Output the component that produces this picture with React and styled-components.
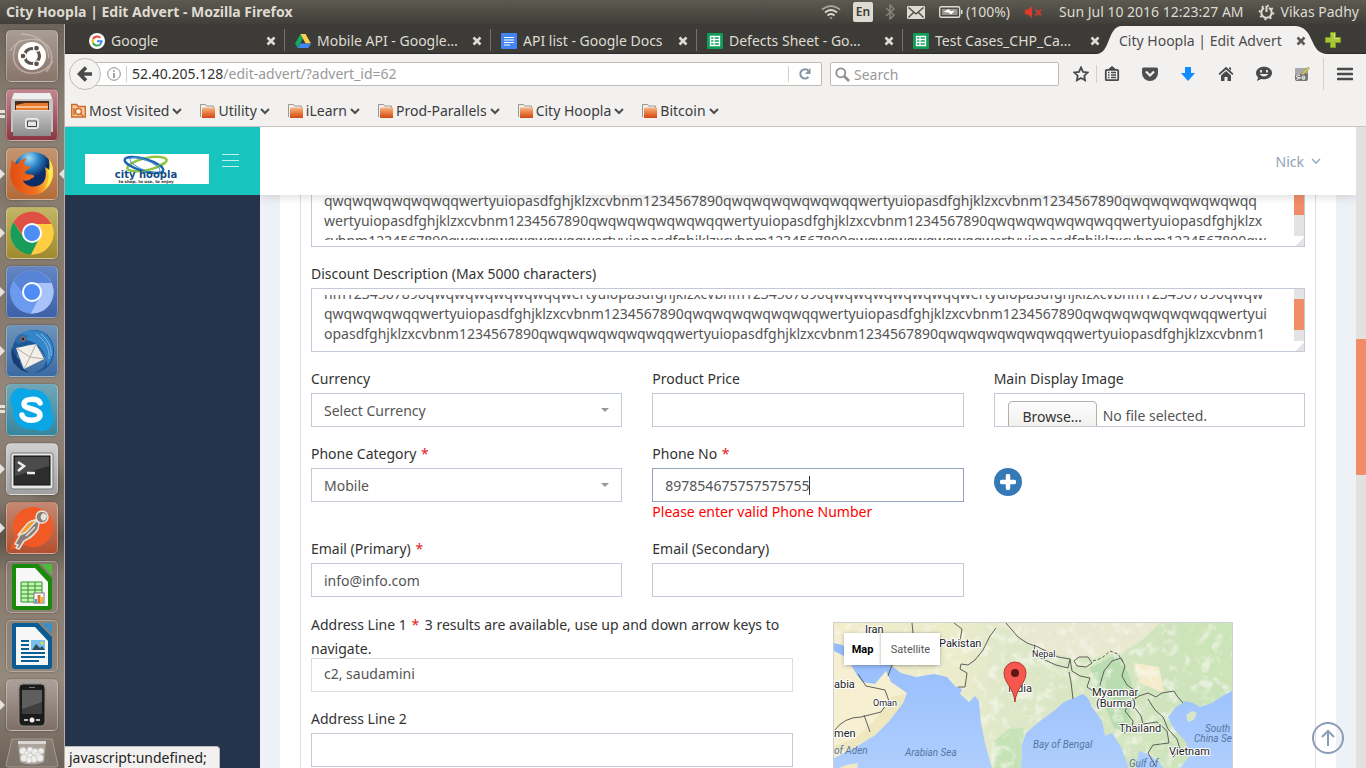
import React, { useEffect, useRef } from "react";
import styled, { createGlobalStyle, css } from "styled-components";

const GlobalStyle = createGlobalStyle`
  * { box-sizing: border-box; }
  body { margin: 0; overflow: hidden; font-family: "Noto Sans", "Open Sans", sans-serif; font-size: 14px; color: #333; }
  button, input, select, textarea { font: inherit; color: inherit; margin: 0; }
  button { border: 0; background: none; padding: 0; }
  a { color: inherit; text-decoration: none; }
  svg { display: block; flex: none; }
`;

const chrome = css`font-family: "Noto Sans", "Open Sans", sans-serif; white-space: nowrap;`;

/* ---------- desktop ---------- */
const Desktop = styled.div`height: 100vh; display: flex; flex-direction: column;`;
const TopPanel = styled.header`
  ${chrome}
  flex: none; height: 24px; display: flex; align-items: center; padding: 0 7px 0 6px;
  background: linear-gradient(#5d5a50, #3f3e39); color: #dfdbd2; line-height: 24px;
`;
const WindowTitle = styled.strong`flex: 1; font-weight: 700;`;
const Indicators = styled.div`display: flex; align-items: center; gap: ${(p) => p.$gap}px; margin-left: ${(p) => p.$before || 0}px;`;
const LanguageBadge = styled.span`
  width: 20px; height: 20px; border-radius: 2px; background: #dfdbd2; color: #3c3b37;
  text-align: center; line-height: 20px; font-size: 12px; font-weight: 600;
`;
const Below = styled.div`flex: 1; min-height: 0; display: flex;`;

/* ---------- launcher ---------- */
const Launcher = styled.nav`
  flex: none; width: 65px; padding-top: 6px; overflow: hidden; border-right: 1px solid #b8b0a6;
  display: flex; flex-direction: column; align-items: center; gap: 7px;
  background:
    radial-gradient(circle at 20% 22%, #6f655b88 0 6px, transparent 24px),
    radial-gradient(circle at 80% 62%, #5c524888 0 6px, transparent 26px),
    linear-gradient(#6c6359 0, #8b8074 12%, #85796d 38%, #93887b 50%, #82776a 64%, #5d5348 69%, #85796c 74%, #94897c 88%, #6c6156);
`;
const Tile = styled.button`
  position: relative; flex: none; width: 52px; height: 52px; border-radius: 5px;
  background: ${(p) => p.$bg}; border: 1px solid #ffffff4d;
  display: flex; align-items: center; justify-content: center;
  box-shadow: 0 0 2px #0006;
`;
const Running = styled.span`
  position: absolute; left: -7px; top: 20px; width: 5px; height: 10px;
  background: ${(p) => (p.$many ? "repeating-linear-gradient(#e6e3de 0 3px, transparent 3px 5px)" : "#e6e3de")};
  clip-path: ${(p) => (p.$many ? "none" : "polygon(0 0, 100% 50%, 0 100%)")};
`;
const Active = styled.span`
  position: absolute; right: -7px; top: 20px; width: 5px; height: 10px; background: #e6e3de;
  clip-path: polygon(100% 0, 0 50%, 100% 100%);
`;

/* ---------- browser chrome ---------- */
const Browser = styled.div`position: relative; flex: 1; min-width: 0; display: flex; flex-direction: column; background: #f2f1f0;`;
const TabStrip = styled.div`
  ${chrome}
  flex: none; height: 30px; display: flex; padding: 0 51px 0 14px; background: #3c3b37;
  color: #dfdbd2; border-bottom: 1px solid #2c2b28; position: relative;
`;
const Tab = styled.div`
  position: relative; flex: 1 1 0; min-width: 0; display: flex; align-items: center; gap: 6px;
  padding: 4px 9px 0 10px; color: ${(p) => (p.$on ? "#4c4c4c" : "inherit")};
  &::after {
    content: ""; display: ${(p) => (p.$line ? "block" : "none")};
    position: absolute; right: 0; top: 5px; bottom: 2px; width: 1px; background: #74726b;
  }
`;
const TabTitle = styled.span`flex: 1; min-width: 0; overflow: hidden; text-overflow: ellipsis; line-height: 20px; position: relative;`;
const TabClose = styled.button`position: relative; width: 10px; height: 10px;`;
const ActiveShape = styled.svg`position: absolute; left: -13px; top: 2px; width: calc(100% + 26px); height: 28px;`;
const NewTab = styled.button`position: absolute; right: 25px; top: 8px;`;
const NavBar = styled.div`${chrome} flex: none; height: 40px; display: flex; align-items: center; padding: 0 13px 0 4px; color: #4c4c4c;`;
const BackButton = styled.button`
  flex: none; width: 32px; height: 32px; border-radius: 50%; background: #f4f3f2; border: 1px solid #c1bcb6;
  display: flex; align-items: center; justify-content: center; position: relative; margin-right: -16px;
`;
const UrlBar = styled.div`
  flex: 1; min-width: 0; height: 24px; display: flex; align-items: center; background: #fff;
  border: 1px solid #c1bcb6; border-radius: 2px; padding: 0 9px 0 21px;
`;
const Divider = styled.span`flex: none; width: 1px; height: ${(p) => p.$h || 16}px; background: #d3d0cc; margin: 0 ${(p) => p.$m || 5}px;`;
const Address = styled.span`flex: 1; color: #999; line-height: 20px; b { color: #333; font-weight: 400; }`;
const SearchBar = styled.label`
  flex: none; width: 229px; height: 24px; margin-left: 8px; display: flex; align-items: center; gap: 4px; background: #fff;
  border: 1px solid #c1bcb6; border-radius: 2px; padding: 0 4px;
`;
const SearchInput = styled.input`border: 0; outline: 0; padding: 0; flex: 1; min-width: 0; background: none; &::placeholder { color: #999; opacity: 1; }`;
const Tools = styled.div`display: flex; align-items: center; gap: 22px;`;
const StarButton = styled.button`margin-left: 14px;`;
const Bookmarks = styled.div`
  ${chrome}
  flex: none; height: 33px; display: flex; align-items: center; gap: 18px; padding: 1px 6px 0;
  color: #3c3c3c; border-bottom: 1px solid #c8c4bf;
`;
const Bookmark = styled.button`display: flex; align-items: center; gap: 3px; white-space: nowrap; line-height: 20px;`;

/* ---------- web page ---------- */
const Viewport = styled.div`flex: 1; min-height: 0; display: flex; overflow: hidden;`;
const Sidebar = styled.aside`flex: none; width: 195px; background: #26344b;`;
const Brand = styled.div`height: 68px; background: #18c4be; display: flex; padding: 27px 20px 0; gap: 13px;`;
const MenuToggle = styled.button`width: 17px; height: 13px; border: solid #c5efed; border-width: 1px 0; display: flex; align-items: center;
  &::after { content: ""; width: 100%; height: 1px; background: #c5efed; }`;
const Main = styled.main`position: relative; flex: 1; min-width: 0; overflow: hidden; background: #eef1f5; padding: 0 20px;`;
const PageHeader = styled.div`
  position: absolute; z-index: 2; left: 0; right: 0; top: 0; height: 68px; background: #fff;
  box-shadow: 0 1px 10px rgba(50, 50, 50, 0.2); display: flex; justify-content: flex-end; padding: 24px 35px 0 0;
`;
const UserMenu = styled.a`display: flex; align-items: center; gap: 7px; height: 20px; color: #8ea3b6;`;
const Card = styled.section`background: #fff; padding: 0 20px; height: 100%;`;
const Form = styled.form`border: solid #ddd; border-width: 0 1px; padding: 56px 10px 0; height: 100%; display: flex; flex-direction: column; gap: 16px;`;
const Columns = styled.div`display: grid; grid-template-columns: repeat(${(p) => p.$n}, 1fr); column-gap: 30px; align-items: start;`;
const AddressStack = styled.div`display: flex; flex-direction: column; gap: 16px; min-width: 0;`;
const Field = styled.div`display: flex; flex-direction: column; min-width: 0; position: relative;`;
const Label = styled.label`line-height: ${(p) => (p.$long ? 24 : 22)}px; margin-bottom: ${(p) => (p.$long ? -3 : 3)}px;`;
const Required = styled.span`color: #e02222; padding: 0 2px 0 1px;`;
const boxed = css`height: 34px; width: 100%; border: 1px solid ${(p) => (p.$active ? "#93a1bb" : p.$muted ? "#ddd" : "#c2cad8")}; border-radius: 0; background: #fff; color: #555; outline: 0;`;
const TextInput = styled.input`${boxed} padding: ${(p) => (p.$muted ? "0 12px 4px" : "0 12px")};`;
const SelectBox = styled.select`
  ${boxed} appearance: none; padding: 0 12px;
  background: #fff url("data:image/svg+xml,%3Csvg xmlns='http://www.w3.org/2000/svg' width='8' height='4'%3E%3Cpath d='M0 0h8l-4 4z' fill='%23999'/%3E%3C/svg%3E") no-repeat right 12px center;
`;
const Caret = styled.span`position: absolute; left: 157px; top: 33px; width: 1px; height: 19px; background: #333;`;
const ErrorText = styled.p`margin: 0; color: #f00; line-height: 20px;`;
const AreaFrame = styled.div`position: relative; flex: none; height: 64px; border: 1px solid #c2cad8; display: flex; padding-left: 12px;`;
const Area = styled.textarea`
  flex: 1; min-width: 0; height: 50px; margin: 6px 0; padding: 0; border: 0; outline: 0; resize: none;
  overflow: hidden; white-space: pre; line-height: 20px; color: #555;
`;
const Track = styled.span`flex: none; width: 10px; height: 52px; background: #e3e3e3; padding-top: ${(p) => p.$top}px;
  &::after { content: ""; display: block; height: 31px; background: #f08d66; }`;
const Grip = styled.span`position: absolute; right: 0; bottom: 0; width: 8px; height: 8px; background: linear-gradient(135deg, transparent 50%, #e4e4e4 50%);`;
const FilePicker = styled.label`${boxed} display: flex; overflow: hidden; padding: 7px 13px 0; gap: 6px; line-height: 30px; white-space: nowrap;`;
const HiddenFile = styled.input`position: absolute; opacity: 0; width: 1px; height: 1px;`;
const Browse = styled.span`
  height: 34px; width: 89px; text-align: center; border: 1px solid #b3b0ac; border-radius: 4px; color: #333;
  background: linear-gradient(#fcfcfc, #eeedec);
`;
const AddButton = styled.button`
  margin-top: 25px; width: 28px; height: 28px; border-radius: 50%; background: #337ab7;
  display: flex; align-items: center; justify-content: center;
`;
const MapFrame = styled.div`position: relative; margin: 9px 0 0 10px; width: 400px; max-width: 100%; height: 300px; border: 1px solid #d0d0d0; overflow: hidden; background: #a3c7fb;`;
const MapTypes = styled.div`position: absolute; left: 10px; top: 10px; display: flex; box-shadow: 0 1px 4px #0004; font-family: Roboto, sans-serif; font-size: 11px;`;
const MapType = styled.button`
  height: 32px; width: ${(p) => (p.$on ? 37 : 59)}px; background: #fff; text-align: center;
  font-weight: ${(p) => (p.$on ? 700 : 400)}; color: ${(p) => (p.$on ? "#000" : "#565656")};
  box-shadow: ${(p) => (p.$on ? "none" : "-1px 0 2px #0003")};
`;
const ScrollTop = styled.button`position: absolute; z-index: 3; right: 12px; bottom: 14px; width: 32px; height: 32px; border: 2px solid #8b9cb5; border-radius: 50%; display: flex; align-items: center; justify-content: center;`;
const PageScrollbar = styled.div`flex: none; width: 10px; background: #e3e1e0; padding-top: 212px; &::after { content: ""; display: block; height: 136px; background: #f08d66; border-radius: 1px; }`;
const StatusText = styled.div`${chrome} position: absolute; left: 0; bottom: 0; z-index: 4; width: 155px; height: 22px; line-height: 22px; padding-left: 4px; color: #222; background: #f2f1f0; border: solid #bbb; border-width: 1px 1px 0 0; border-top-right-radius: 4px;`;

/* ---------- small icons ---------- */
const Chevron = ({ size = 10, color = "#4c4c4c", width = 2 }) => (
  <svg width={size} height={size} viewBox="0 0 10 10"><path d="M1 3l4 4 4-4" fill="none" stroke={color} strokeWidth={width} /></svg>
);
const Cross = ({ color }) => (
  <svg width="10" height="10" viewBox="0 0 10 10"><path d="M1.500 1.500l7 7M8.500 1.500l-7 7" stroke={color} strokeWidth="2.600" /></svg>
);
const GoogleIcon = () => (
  <svg width="16" height="16" viewBox="0 0 16 16"><circle cx="8" cy="8" r="8" fill="#fff" />
    <g fill="none" strokeWidth="2"><path d="M11.300 4.800A4.500 4.500 0 0 0 4 6" stroke="#ea4335" /><path d="M4 6a4.500 4.500 0 0 0 0 4" stroke="#fbbc05" /><path d="M4 10a4.500 4.500 0 0 0 7 1.400" stroke="#34a853" /><path d="M8 8.200h4.600a4.500 4.500 0 0 1-1.600 3.200" stroke="#4285f4" /></g></svg>
);
const DriveIcon = () => (
  <svg width="16" height="16" viewBox="0 0 16 16"><path d="M5.500 1L0 10.500l2.700 4.500L8 5.600z" fill="#11a861" /><path d="M5.500 1h5L16 10.500h-5.400z" fill="#ffcf48" /><path d="M5.400 10.500H16L13.300 15H2.700z" fill="#4285f4" /></svg>
);
const DocsIcon = () => (
  <svg width="16" height="16" viewBox="0 0 16 16"><rect width="16" height="16" rx="1" fill="#4285f4" /><path d="M3 4.500h10M3 7h10M3 9.500h10M3 12h6" stroke="#fff" strokeWidth="1.200" /></svg>
);
const SheetsIcon = () => (
  <svg width="16" height="16" viewBox="0 0 16 16"><rect width="16" height="16" rx="1" fill="#0f9d58" /><path d="M3.500 3.500h9v9h-9zM3.500 6.500h9M3.500 9.500h9M7 3.500v9" fill="none" stroke="#fff" strokeWidth="1.300" /></svg>
);
const FolderIcon = ({ visited }) => visited ? (
  <svg width="15" height="15" viewBox="0 0 15 15"><path d="M.7 14V1.500h5l1.300 2h7.300V14z" fill="#f7c9a4" stroke="#cf6a24" strokeWidth="1.400" /><circle cx="7.500" cy="8.500" r="3" fill="#fff2e4" stroke="#cf6a24" strokeWidth="1.400" /><path d="M9.500 10.500l3 3M3 5v7" stroke="#cf6a24" strokeWidth="1.400" /></svg>
) : (
  <svg width="15" height="14" viewBox="0 0 15 14"><defs><linearGradient id="folder" x2="0" y2="1"><stop stopColor="#f6b888" /><stop offset=".55" stopColor="#e6763a" /><stop offset="1" stopColor="#cf4a17" /></linearGradient></defs><path d="M.5 13V.5h5l1 1.500h7v2" fill="#f4f2f0" stroke="#9a9690" /><path d="M2 3.500h13V14H2z" fill="url(#folder)" /></svg>
);

/* ---------- launcher artwork ---------- */
const Art = ({ children }) => <svg width="50" height="50" viewBox="0 0 50 50">{children}</svg>;
const DashArt = () => (
  <Art><g fill="none" stroke="#d5cac2" strokeWidth="1.500" opacity=".6"><path d="M3 20C12 5 34 5 42 17c4 7 4 17-3 24" /><path d="M46 30C37 45 17 46 9 34 4 26 7 14 14 9" /><path d="M14 3c16 0 27 9 28 24" /></g>
    <circle cx="25" cy="25" r="14" fill="#fff" /><circle cx="25" cy="25" r="7.500" fill="none" stroke="#5d5149" strokeWidth="3.200" />
    <g fill="#5d5149" stroke="#fff" strokeWidth="1.300"><circle cx="16" cy="25" r="3" /><circle cx="29.500" cy="17.200" r="3" /><circle cx="29.500" cy="32.800" r="3" /></g></Art>
);
const FilesArt = () => (
  <Art><defs><linearGradient id="drawer" x2="0" y2="1"><stop stopColor="#c9c9c9" /><stop offset="1" stopColor="#8d8d8d" /></linearGradient></defs>
    <path d="M7 3h36l3 7v32H4V10z" fill="#c4c4c4" /><path d="M7 3h36l2 6H5z" fill="#efefef" /><path d="M8 11h34v10H8z" fill="#4b2d20" /><path d="M9 15l9-2h23v8H9z" fill="#e87a2d" /><path d="M9 17h32" stroke="#ffd9b0" strokeWidth="1.500" /><path d="M6 20h38v26H6z" fill="url(#drawer)" /><path d="M6 20.500h38" stroke="#dedede" /><rect x="18.500" y="28.500" width="13" height="10" rx="2" fill="#ddd" stroke="#efefef" /><path d="M20.500 31h9v5.500h-9z" fill="#e6e6e6" stroke="#444" /></Art>
);
const FirefoxArt = () => (
  <Art><defs><radialGradient id="globe" cx=".4" cy=".15"><stop stopColor="#a4ddf7" /><stop offset=".5" stopColor="#2a83c6" /><stop offset="1" stopColor="#0b2c66" /></radialGradient><linearGradient id="tail"><stop stopColor="#e44b12" /><stop offset=".6" stopColor="#ee7320" /><stop offset="1" stopColor="#ffdf39" /></linearGradient></defs>
    <circle cx="26" cy="23" r="20" fill="url(#globe)" /><path d="M4 17c-4 18 8 30 22 29 13-1 21-12 20-25 0-5-3-9-4-11 2 6 0 9 0 11l-4-3c2 8 1 17-8 19-7 2-13-2-14-6 3 2 7 0 9-2 2 0 3-2 1-3-2-1-6 0-8-2 0-3 5-4 6-6-2-1-5-1-7-2 0-3 1-5 3-7-5 1-8 3-9 6-3 0-5-2-6-4-1 2-1 5 0 6z" fill="url(#tail)" /><path d="M42 10c6 9 6 22-4 30 4-7 5-14 2-21l3 3z" fill="#ffe84a" /></Art>
);
const ChromeArt = ({ a, b, c, inner = "#4d8df5" }) => (
  <Art><circle cx="25" cy="25" r="21.500" fill={c} /><path d="M25 16h19.300A21.500 21.500 0 0 0 6.400 14l9.800 14z" fill={a} /><path d="M6.400 14A21.500 21.500 0 0 0 24.500 46.500L33 30 17 30z" fill={b} /><path d="M33 29L24 46.500A21.500 21.500 0 0 0 44.500 16H28z" fill={c} /><circle cx="25" cy="25" r="10" fill="#fff" /><circle cx="25" cy="25" r="8" fill={inner} /></Art>
);
const ThunderbirdArt = () => (
  <Art><path d="M7 39C1 23 8 6 25 4c13-1 22 8 22 21 0 12-8 21-20 22 8-3 12-8 13-14-4-5-6-11-12-13C19 15 10 24 7 39z" fill="#1d5796" /><path d="M5 21c-3 13 5 24 18 26-7-3-10-8-10-13-4-3-7-8-8-13z" fill="#153d76" /><path d="M8 13C16 2 36 0 44 15c4 9 2 19-4 25 1-9-5-21-17-25-6-2-11-1-15-2z" fill="#3585c9" /><path d="M9 22l20-4 8 15-20 10z" fill="#f2eee8" /><path d="M9 22l14 9 6-13M17 43l6-12 14 2" fill="none" stroke="#b3aca2" /><path d="M29 8c9 6 14 14 13 25M34 8c8 7 11 15 10 22" fill="none" stroke="#7fbbe6" strokeWidth="1" /><path d="M8 13l5-5 8 1-3 7-8 2z" fill="#2d6cab" /><circle cx="16" cy="13" r="2" fill="#112233" stroke="#cb6845" /></Art>
);
const SkypeArt = () => (
  <Art><path d="M14 3c4 0 6 1 8 2 13-3 24 9 22 21 5 7 2 20-9 20-4 0-5-1-8-2C14 46 4 36 6 23 0 15 5 3 14 3z" fill="#0aa6e6" /><path d="M33 18c-2-5-16-5-16 1s16 4 16 11-16 7-18 0" fill="none" stroke="#fff" strokeWidth="5.500" strokeLinecap="round" /></Art>
);
const TerminalArt = () => (
  <Art><rect x="4" y="9" width="42" height="36" rx="2" fill="#e8e8e8" stroke="#777" /><rect x="7" y="12" width="36" height="29" fill="#2d2d2d" stroke="#111" /><path d="M8 13h34v9L8 32z" fill="#4b4b4b" /><path d="M11 18l6 4-6 5M20 29h8" fill="none" stroke="#eee" strokeWidth="2.500" /></Art>
);
const PostmanArt = () => (
  <Art><circle cx="26" cy="24" r="20" fill="#f15a24" /><path d="M3 47l13-5-8-8z" fill="#f15a24" />
    <g stroke="#e6e2de" strokeWidth="1.500" strokeLinejoin="round"><path d="M28 17l4 3-1 6q-5 8-14 12l-5 8-3-1 2-3-3-1 5-9 9-9z" fill="#8a7d75" /><path d="M11 32l9-11q4-4 10-4l-9 10q-3 4-10 5z" fill="#f79c23" /><path d="M19 33l9-9" fill="none" /><circle cx="35" cy="14" r="6" fill="#8a7d75" /></g>
    <path d="M36 10q-5 4 0 8 3-1 4-4 0-3-4-4z" fill="#e6e2de" /></Art>
);
const DocumentArt = ({ color, light, sheet }) => (
  <Art><path d="M7 2h24l14 14v29q0 3-3 3H8q-3 0-3-3V5q0-3 2-3z" fill={color} /><path d="M34 2h11v11z" fill={light} /><path d="M9 6h19l13 14v24H9z" fill="#f7f7f7" />
    {sheet ? <><path d="M14 20h21v20H14zM14 24h21M14 28h21M14 32h21M14 36h21M21 20v20M28 20v20" fill="#c8f0bd" stroke="#2b9a1d" /><rect x="27" y="31" width="10" height="10" fill="#fff" stroke="#777" /><path d="M29 41v-4" stroke="#3aa2dd" strokeWidth="2" /><path d="M32 41v-8" stroke="#e56f26" strokeWidth="3" /><path d="M35 41v-6" stroke="#f3b51e" strokeWidth="2" /></>
      : <><path d="M14 20h8M14 24h8M14 28h8M14 32h24M14 36h24M14 40h18" stroke="#0b5f94" strokeWidth="2" /><path d="M24 19h14v10H24z" fill="#78c1ec" /><path d="M25 29l4-6 4 4 2-2 3 4z" fill="#2f4d5c" /><circle cx="35" cy="22" r="1.500" fill="#f5d33c" /></>}
  </Art>
);
const PhoneArt = () => (
  <Art><rect x="12" y="4" width="26" height="42" rx="4" fill="#1b1b1b" stroke="#888" /><path d="M15 10h20v24H15z" fill="#3f3f3f" /><path d="M15 10h20v12L15 29z" fill="#5e5e5e" /><path d="M22 7.500h6" stroke="#777" /><circle cx="25" cy="40" r="2.500" fill="#eee" /><path d="M17 40h4M29 40h4" stroke="#eee" strokeWidth="1.500" /></Art>
);
const Trash = () => (
  <svg width="54" height="30" viewBox="0 0 54 30"><path d="M7 1h40l6 26q0 2-2 2H3q-2 0-2-2z" fill="#8f877e" fillOpacity=".5" stroke="#a39b92" /><path d="M13 4h28l-2 20q-12 5-24 0z" fill="#c6c3be" fillOpacity=".6" /><path d="M13 3h28v3H13z" fill="#d9d7d3" />
    <g fill="#efeeec" stroke="#c4c1bd" strokeWidth=".6"><circle cx="18" cy="13" r="3.500" /><circle cx="25" cy="12" r="3" /><circle cx="30" cy="14" r="3.500" /><circle cx="36" cy="13" r="3" /><circle cx="22" cy="16" r="3" /><circle cx="19" cy="20" r="3.500" /><circle cx="25" cy="18" r="3" /><circle cx="29" cy="21" r="3.500" /><circle cx="24" cy="22" r="3" /><circle cx="33" cy="17" r="3" /><circle cx="35" cy="20" r="3.500" /></g></svg>
);

const APPS = [
  { name: "Dash", bg: "linear-gradient(#a89d94, #897469)", art: <DashArt /> },
  { name: "Files", bg: "linear-gradient(#c08890, #8b3542)", art: <FilesArt />, run: 2 },
  { name: "Firefox", bg: "linear-gradient(#c39572, #b26b3a)", art: <FirefoxArt />, run: 1, active: true },
  { name: "Chrome", bg: "linear-gradient(#c2b566, #9f8b2e)", art: <ChromeArt a="#df5145" b="#179c5b" c="#ffcd41" />, run: 1 },
  { name: "Chromium", bg: "linear-gradient(#6485c2, #3d61a5)", art: <ChromeArt a="#5884d8" b="#6c9af0" c="#a7c3fa" />, run: 1 },
  { name: "Thunderbird", bg: "linear-gradient(#6f93b8, #3b6ba3)", art: <ThunderbirdArt />, run: 1 },
  { name: "Skype", bg: "linear-gradient(#70a6b8, #36869f)", art: <SkypeArt />, run: 2 },
  { name: "Terminal", bg: "linear-gradient(#d0d0d0, #a0a0a0)", art: <TerminalArt />, run: 1 },
  { name: "Postman", bg: "linear-gradient(#c38874, #b4502f)", art: <PostmanArt />, run: 1 },
  { name: "Calc", bg: "#90857966", art: <DocumentArt color="#188a0c" light="#4dbb3c" sheet /> },
  { name: "Writer", bg: "#90857966", art: <DocumentArt color="#0a5d94" light="#3b8fc4" /> },
  { name: "Phone", bg: "linear-gradient(#aba099, #7f7067)", art: <PhoneArt />, run: 1 },
];

const TABS = [
  ["Google", GoogleIcon],
  ["Mobile API - Google…", DriveIcon],
  ["API list - Google Docs", DocsIcon],
  ["Defects Sheet - Go…", SheetsIcon],
  ["Test Cases_CHP_Ca…", SheetsIcon],
];
const BOOKMARKS = ["Most Visited", "Utility", "iLearn", "Prod-Parallels", "City Hoopla", "Bitcoin"];

/* ---------- sample advert text ---------- */
const FILL = "qwqwqwqwqwqwq";
const KEYS = "qwertyuiopasdfghjklzxcvbnm1234567890";
const UNIT = KEYS + FILL;
const ADVERT = [
  KEYS,
  FILL + UNIT + UNIT + "q",
  KEYS.slice(1) + FILL + UNIT + "qwertyuiopasdfghjklzx",
  "cvbnm1234567890" + FILL + UNIT + KEYS + "qw",
  KEYS,
].join("\n");
const DISCOUNT = [
  "nm1234567890" + FILL + UNIT + KEYS + "qwqw",
  "qwqwqwqwq" + UNIT + UNIT + "qwertyui",
  KEYS.slice(8) + FILL + UNIT + "qwertyuiopasdfghjklzxcvbnm1",
  KEYS,
].join("\n");

function ScrolledArea({ id, label, text, offset, thumb }) {
  const ref = useRef(null);
  useEffect(() => { ref.current.scrollTop = offset; }, [offset]);
  return (
    <AreaFrame>
      <Area id={id} ref={ref} aria-label={label} defaultValue={text} spellCheck={false} wrap="off" />
      <Track $top={thumb} /><Grip />
    </AreaFrame>
  );
}

const LandPatch = ({ d, fill = "#dcebc9" }) => <path d={d} fill={fill} />;

function AsiaMap() {
  return (
    <svg width="400" height="300" viewBox="0 0 400 300">
      <defs>
        <linearGradient id="sea" x2="0" y2="1"><stop stopColor="#8fb8fb" /><stop offset=".5" stopColor="#b0cffe" /></linearGradient>
        <linearGradient id="land"><stop stopColor="#f2ecc9" /><stop offset=".3" stopColor="#ebeccb" /><stop offset=".42" stopColor="#dfe8c9" /><stop offset="1" stopColor="#c8e2b8" /></linearGradient>
        <filter id="terrain" x="0" y="0" width="100%" height="100%">
          <feTurbulence type="fractalNoise" baseFrequency=".09" numOctaves="3" seed="8" />
          <feColorMatrix values="0 0 0 0 .96  0 0 0 0 .95  0 0 0 0 .88  0 4 0 0 -2" />
        </filter>
        <clipPath id="coast"><path d="M0 0H400V67L390 72 378 80 366 84 359 80 352 78 342 84 334 94 340 106 352 119 355 134 346 145 333 150 326 140 316 132 305 128 302 145 311 165H299L294 143 287 124 278 110 271 113 268 98 258 84 254 75 249 71 240 75 230 79 220 88 206 98 192 110 188 122 187 148 181 165H166L157 142 151 120 147 100 145 78 141 73 135 79 126 71 128 66 121 63 113 54 100 51 82 54 67 50 54 40 43 36 22 31 18 28 8 22 0 20z" /></clipPath>
      </defs>
      <rect width="400" height="300" fill="url(#sea)" />
      <path d="M0 28L12 34 23 52 28 59 41 61 52 48 57 59 73 70 69 80 55 98 41 112 20 125 0 135z" fill="#f7efd2" />
      <path d="M40 98l18-24 14-4-3 10-14 18-14 14-21 13-20 6v-8l22-8z" fill="#efe7bf" />
      <path d="M0 147L12 142 24 140 20 165H0z" fill="#f2e8c4" />
      <g clipPath="url(#coast)">
        <rect width="400" height="300" fill="url(#land)" />
        <LandPatch d="M160 0H325Q310 20 285 30L240 36 200 24 176 8z" fill="#e9e9d2" />
        <LandPatch d="M300 40L325 44 330 70 306 60z" fill="#f4eccb" />
        <LandPatch d="M256 45L285 30 298 60 295 110 280 105z" fill="#b9dcb0" />
        <LandPatch d="M160 118L175 106 190 105 185 165H160z" fill="#c6e2b6" />
        <LandPatch d="M345 0H400V66L350 50z" fill="#cbe4b8" />
        <rect width="400" height="170" filter="url(#terrain)" opacity=".6" />
      </g>
      <path d="M352 92l6-4 5 2-3 7-6 2z" fill="#d8e6c6" />
      <path d="M0 108q10-14 27-14l20-5 8-11-4-11-19-4-8-12M30 92l6 17M78 0l1 10M120 0l8 6-2 12-11 6M162 5l-6 8-7 14-8 10-7 5-7-1-1 5 7 4-2 14h-7M54 53l4-11 9-2 20 1M172 0l12 14 9 6 8 3-2 8 14 7 9 4 12 3 2-9-12-2-10-5-14-7M236 36l2 12 8 5 10 2-3 9 6 4M240 38l5-4h9l4 6-6 4-9-1zM235 49l2 10 2 17M266 62l4-14 8-10 9-3 4 8-3 10 5 9 7 5 2 8-7 5-4 8 8 10-1 9-8 3M295 80l10-7 9-3 8 4 6-4 12-2 3 5 6 7M301 85l6 8 2 8 14-2 10 9 2 12-16 2-5 8 8 14M314 76l7 11 8 7 5 12 9 10 3 10-7 8" fill="none" stroke="#5d615c" strokeWidth="1" strokeLinejoin="round" />
      <path d="M259 38l9-3 8-7 8 3 5 8" fill="none" stroke="#5d615c" strokeDasharray="3 2" />
      <g fontFamily="Roboto, sans-serif" fontSize="11" fill="#222" stroke="#fff" strokeWidth="2" paintOrder="stroke" strokeLinejoin="round">
        <text x="31" y="10">Iran</text><text x="105" y="24">Pakistan</text><text x="198" y="34" fontSize="9">Nepal</text>
        <text x="0" y="65">abia</text><text x="39" y="83" fontSize="9">Oman</text><text x="0" y="114">men</text><text x="174" y="69">India</text>
        <text x="258" y="73">Myanmar</text><text x="262" y="84">(Burma)</text><text x="285" y="109">Thailand</text><text x="335" y="132">Vietnam</text>
        <g fontSize="10" fontStyle="italic" fill="#55779f" stroke="none"><text x="0" y="131">of Aden</text><text x="71" y="133">Arabian Sea</text><text x="199" y="125">Bay of Bengal</text><text x="371" y="109">South</text><text x="360" y="119">China Se</text><text x="295" y="144">Gulf of</text><text x="290" y="155">Thailand</text></g>
      </g>
      <path d="M181 79c-1-14-11-19-11-29a11 11 0 0 1 22 0c0 10-10 15-11 29z" fill="#f6584f" stroke="#b53a35" /><circle cx="181" cy="50" r="4" fill="#5e1715" />
    </svg>
  );
}

const Star = () => <Required>*</Required>;

export default function App() {
  return (
    <Desktop>
      <GlobalStyle />
      <TopPanel>
        <WindowTitle>City Hoopla | Edit Advert - Mozilla Firefox</WindowTitle>
        <Indicators $gap={12}>
          <svg width="20" height="16" viewBox="0 0 20 16" fill="none" stroke="#dfdbd2" strokeWidth="1.800"><path d="M1 5.500q9-7 18 0" opacity=".6" /><path d="M4 8.500q6-5 12 0M6.500 11.500q3.500-3 7 0" /><path d="M8.500 13.500h3L10 15z" fill="#dfdbd2" stroke="none" /></svg>
          <LanguageBadge>En</LanguageBadge>
          <svg width="10" height="16" viewBox="0 0 10 16" fill="none" stroke="#8a877f" strokeWidth="1.400"><path d="M1 4l8 7-4 4V1l4 4-8 7" /></svg>
          <svg width="18" height="13" viewBox="0 0 18 13"><rect width="18" height="13" rx="1" fill="#dfdbd2" /><path d="M1.500 1.500L9 8l7.500-6.500M1.500 11.500l5-5M16.500 11.500l-5-5" fill="none" stroke="#45443f" strokeWidth="1.300" /></svg>
        </Indicators>
        <Indicators $gap={3} $before={14}>
          <svg width="24" height="12" viewBox="0 0 24 12"><rect x=".7" y=".7" width="20" height="10.600" rx="1.500" fill="none" stroke="#dfdbd2" strokeWidth="1.400" /><rect x="3" y="3" width="15.500" height="6" fill="#99968e" /><path d="M22 4h1.500v4H22z" fill="#dfdbd2" /><path d="M4.500 6l5-3 2 2.200L16 4.500l-4 4-2.300-2z" fill="#fff" /></svg>
          <span>(100%)</span>
        </Indicators>
        <Indicators $gap={16} $before={14}>
          <svg width="19" height="12" viewBox="0 0 19 12"><path d="M1 3.500h3L8 0v12L4 8.500H1z" fill="#e0382b" /><path d="M11.500 3.500l5.500 6M17 3.500l-5.500 6" stroke="#c23b30" strokeWidth="2" /></svg>
          <span>Sun Jul 10 2016 12:23:27 AM</span>
        </Indicators>
        <Indicators $gap={6} $before={14}>
          <svg width="17" height="17" viewBox="0 0 17 17"><g stroke="#dfdbd2" fill="none"><path d="M11 3.900A5.200 5.200 0 1 1 6 3.900" strokeWidth="2" /><circle cx="8.500" cy="8.500" r="6.800" strokeWidth="2" strokeDasharray="2 3.340" /><path d="M8.500 2v6" strokeWidth="2" /></g></svg>
          <span>Vikas Padhy</span>
        </Indicators>
      </TopPanel>
      <Below>
        <Launcher>
          {APPS.map((a) => (
            <Tile key={a.name} $bg={a.bg} aria-label={a.name}>
              {a.run && <Running $many={a.run > 1} />}{a.art}{a.active && <Active />}
            </Tile>
          ))}
          <Trash />
        </Launcher>
        <Browser>
          <TabStrip>
            {TABS.map(([title, Icon], i) => (
              <Tab key={title} $line={i < 4}><Icon /><TabTitle>{title}</TabTitle><TabClose aria-label="Close tab"><Cross color="#dfdbd2" /></TabClose></Tab>
            ))}
            <Tab $on>
              <ActiveShape viewBox="0 0 232 28" preserveAspectRatio="none"><path d="M0 28C15 28 11 0 26 0H198C220 0 212 28 232 28z" fill="#f2f1f0" /></ActiveShape>
              <TabTitle>City Hoopla | Edit Advert</TabTitle><TabClose aria-label="Close tab"><Cross color="#5c5b58" /></TabClose>
            </Tab>
            <NewTab aria-label="New tab"><svg width="16" height="16" viewBox="0 0 16 16"><path d="M5.500 .5h5v5h5v5h-5v5h-5v-5h-5v-5h5z" fill="#a9c53a" stroke="#7d9c1f" /><path d="M6.500 2h3v4.500h4.500" fill="none" stroke="#d2e27e" /></svg></NewTab>
          </TabStrip>
          <NavBar>
            <BackButton aria-label="Back"><svg width="16" height="16" viewBox="0 0 16 16"><path d="M9 1.500L2.500 8 9 14.500M3 8h12" fill="none" stroke="#4a4a4a" strokeWidth="3.600" /></svg></BackButton>
            <UrlBar>
              <svg width="14" height="14" viewBox="0 0 14 14" fill="none" stroke="#8c8c8c"><circle cx="7" cy="7" r="6.300" /><path d="M7 6v5M7 3.200v1.600" strokeWidth="1.600" /></svg>
              <Divider $m={5} />
              <Address><b>52.40.205.128</b>/edit-advert/?advert_id=62</Address>
              <Divider $m={9} />
              <svg width="14" height="14" viewBox="0 0 14 14"><path d="M10.500 10a4.700 4.700 0 1 1 0-6.300" fill="none" stroke="#8495a5" strokeWidth="2" /><path d="M12.500 1v6H7z" fill="#8495a5" /></svg>
            </UrlBar>
            <SearchBar>
              <svg width="15" height="15" viewBox="0 0 15 15" fill="none" stroke="#8c8c8c"><circle cx="5.800" cy="5.800" r="4.500" strokeWidth="1.800" /><path d="M9 9l5 5" strokeWidth="2.500" /></svg>
              <SearchInput aria-label="Search" placeholder="Search" />
            </SearchBar>
            <StarButton aria-label="Bookmark"><svg width="16" height="16" viewBox="0 0 16 16"><path d="M8 1.500l2 4.300 4.700.6-3.400 3.300.8 4.600L8 12l-4.100 2.300.8-4.600L1.300 6.400 6 5.800z" fill="none" stroke="#4a4a4a" strokeWidth="1.800" /></svg></StarButton>
            <Divider $m={7} $h={18} />
            <Tools>
              <svg width="16" height="16" viewBox="0 0 16 16" fill="none" stroke="#4a4a4a"><rect x="1.800" y="3.800" width="12.400" height="10.400" rx="1" strokeWidth="1.800" /><path d="M5 3l3-2.500L11 3" fill="#4a4a4a" /><path d="M4 6.500h1.500M7 6.500h5M4 9h1.500M7 9h5M4 11.500h1.500M7 11.500h5" strokeWidth="1.300" /></svg>
              <svg width="16" height="16" viewBox="0 0 16 16"><path d="M1.500 1.500h13q1.500 0 1.500 1.500v4a8 8 0 0 1-16 0V3q0-1.500 1.500-1.500z" fill="#4f4f4f" /><path d="M4 5.500l4 4 4-4" fill="none" stroke="#f2f1f0" strokeWidth="2.200" /></svg>
              <svg width="16" height="16" viewBox="0 0 16 16"><path d="M5 1h6v6h4l-7 8-7-8h4z" fill="#0f8dff" /></svg>
              <svg width="16" height="16" viewBox="0 0 16 16" fill="#4a4a4a"><path d="M8 .8l7.500 7-1.200 1.200L8 3.500 1.700 9 .5 7.800zM11 1.500h2v3l-2-1.800z" /><path d="M3 9.500l5-4.500 5 4.500V15H9.500v-4h-3v4H3z" /></svg>
              <svg width="16" height="16" viewBox="0 0 16 16"><path d="M8 .8c4.400 0 8 2.600 8 6.200s-3.600 6.300-8 6.300c-1 0-2 0-2.800-.3L.8 15l1.400-3.600C.8 10.300 0 8.700 0 7 0 3.400 3.600.8 8 .8z" fill="#4a4a4a" /><path d="M5 4v2.500M11 4v2.500" stroke="#eee" strokeWidth="1.800" /><path d="M3.500 8q4.500 5 9 0z" fill="#eee" /></svg>
              <svg width="16" height="16" viewBox="0 0 16 16"><rect x="1" y="2" width="13" height="13" rx="2" fill="#777" /><path d="M1 3q0-1 1-1h10l2 1v4L1 9z" fill="#aaa" /><path d="M6 9.500q-3-1.500-3.500.5t3 1.500-3 2M8 12h3q0-2-1.500-2T8 12t3 1" fill="none" stroke="#f3f3f3" /><path d="M7.500 8L14 1l1.500 1.500L9 9z" fill="#e3cf33" stroke="#777" strokeWidth=".5" /></svg>
            </Tools>
            <Divider $m={13} $h={32} />
            <svg width="16" height="14" viewBox="0 0 16 14"><path d="M1 2h14M1 7h14M1 12h14" stroke="#4a4a4a" strokeWidth="2.600" strokeLinecap="round" /></svg>
          </NavBar>
          <Bookmarks>
            {BOOKMARKS.map((b, i) => <Bookmark key={b}><FolderIcon visited={i === 0} />{b}<Chevron /></Bookmark>)}
          </Bookmarks>
          <Viewport>
            <Sidebar>
              <Brand>
                <svg width="124" height="30" viewBox="0 0 124 30"><path d="M0 0h124v30H0z" fill="#fff" />
                  <g fill="none"><ellipse cx="62" cy="10" rx="20" ry="6" stroke="#8ec63f" strokeWidth="2.500" transform="rotate(-12 62 10)" /><ellipse cx="59" cy="11" rx="20" ry="6" stroke="#1a67b2" strokeWidth="2.500" transform="rotate(16 59 11)" /><ellipse cx="60" cy="11" rx="16" ry="5" stroke="#4d92c9" transform="rotate(22 60 11)" /><path d="M45 16q15 6 34-8" stroke="#8ec63f" /></g>
                  <text x="61" y="24" textAnchor="middle" fontFamily="DejaVu Sans" fontWeight="700" fontSize="10" fill="#154c86">city hoopla</text>
                  <text x="61" y="29" textAnchor="middle" fontFamily="DejaVu Sans" fontWeight="700" fontSize="4" fill="#333">to shop, to use, to enjoy</text></svg>
                <MenuToggle aria-label="Toggle menu" />
              </Brand>
            </Sidebar>
            <Main>
              <PageHeader><UserMenu href="#">Nick<Chevron color="#8ea3b6" width={1.3} /></UserMenu></PageHeader>
              <Card>
                <Form>
                  <ScrolledArea id="advert" label="Advert Description" text={ADVERT} offset={19} thumb={0} />
                  <Field>
                    <Label htmlFor="discount">Discount Description (Max 5000 characters)</Label>
                    <ScrolledArea id="discount" text={DISCOUNT} offset={11} thumb={10} />
                  </Field>
                  <Columns $n={3}>
                    <Field><Label htmlFor="currency">Currency</Label><SelectBox id="currency"><option>Select Currency</option></SelectBox></Field>
                    <Field><Label htmlFor="price">Product Price</Label><TextInput id="price" /></Field>
                    <Field><Label htmlFor="image">Main Display Image</Label><FilePicker htmlFor="image"><Browse>Browse…</Browse>No file selected.<HiddenFile id="image" type="file" /></FilePicker></Field>
                  </Columns>
                  <Columns $n={3}>
                    <Field><Label htmlFor="category">Phone Category <Star /></Label><SelectBox id="category"><option>Mobile</option></SelectBox></Field>
                    <Field><Label htmlFor="phone">Phone No <Star /></Label><TextInput id="phone" $active defaultValue="897854675757575755" /><Caret /><ErrorText>Please enter valid Phone Number</ErrorText></Field>
                    <AddButton type="button" aria-label="Add phone"><svg width="16" height="16" viewBox="0 0 16 16"><path d="M8 2v12M2 8h12" stroke="#fff" strokeWidth="4.500" strokeLinecap="round" /></svg></AddButton>
                  </Columns>
                  <Columns $n={3}>
                    <Field><Label htmlFor="email">Email (Primary) <Star /></Label><TextInput id="email" defaultValue="info@info.com" /></Field>
                    <Field><Label htmlFor="email2">Email (Secondary)</Label><TextInput id="email2" /></Field>
                  </Columns>
                  <Columns $n={2}>
                    <AddressStack>
                      <Field>
                        <Label $long htmlFor="address1">Address Line 1 <Star /> 3 results are available, use up and down arrow keys to navigate.</Label>
                        <TextInput $muted id="address1" defaultValue="c2, saudamini" />
                      </Field>
                      <Field><Label htmlFor="address2">Address Line 2</Label><TextInput id="address2" /></Field>
                    </AddressStack>
                    <MapFrame><AsiaMap /><MapTypes><MapType type="button" $on>Map</MapType><MapType type="button">Satellite</MapType></MapTypes></MapFrame>
                  </Columns>
                </Form>
              </Card>
              <ScrollTop aria-label="Back to top"><svg width="16" height="18" viewBox="0 0 16 18"><path d="M8 17V2M2 8l6-6 6 6" fill="none" stroke="#8b9cb5" strokeWidth="2" /></svg></ScrollTop>
            </Main>
            <PageScrollbar />
          </Viewport>
          <StatusText>javascript:undefined;</StatusText>
        </Browser>
      </Below>
    </Desktop>
  );
}
